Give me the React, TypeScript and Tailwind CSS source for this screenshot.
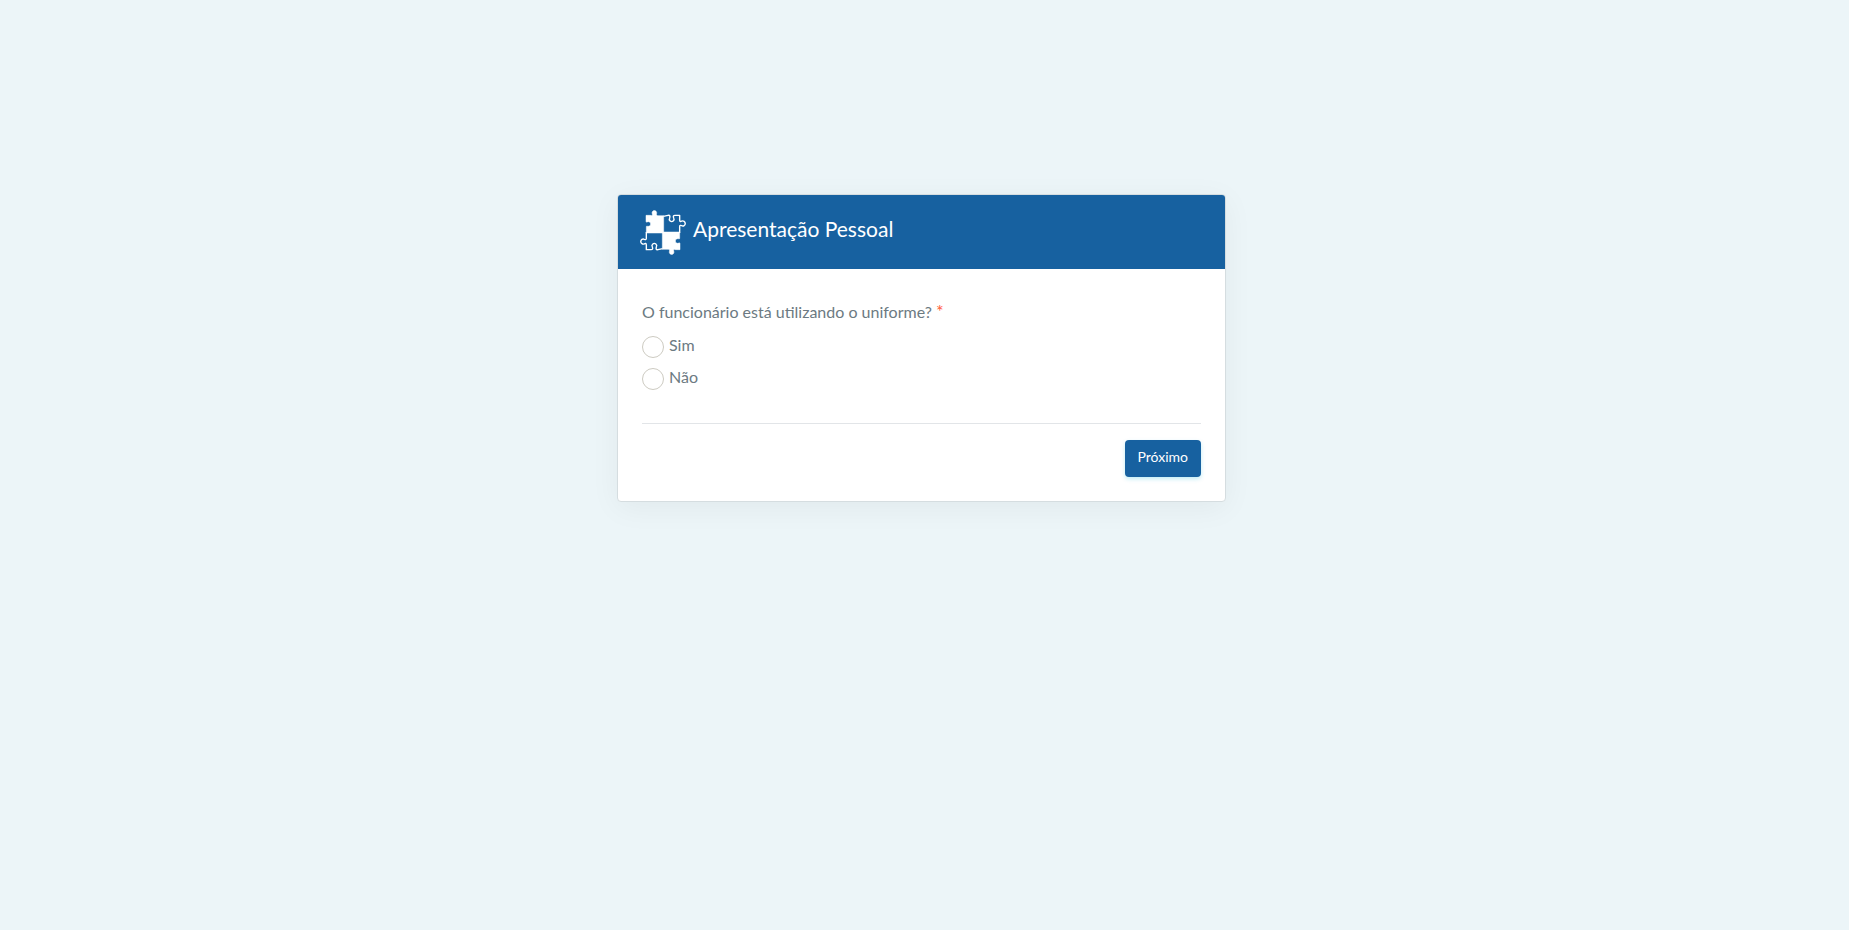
import React from "react";

function PuzzleHalf() {
  return (
    <>
      <path
        fill="#fff"
        stroke="#fff"
        strokeWidth="1.5"
        d="M48 44H62C67 45 68 43 66.500 39A7 7 0 1 1 80 38C79 42 79 44 83 45H101V97H49V79C48 75 52 77 55 77A7 7 0 1 0 55 63C51 64 48 66 48 62Z"
      />
      <path
        fill="none"
        stroke="#fff"
        strokeWidth="4.2"
        strokeLinejoin="round"
        d="M100 47L114 44C121 43 120 48 119 52A7 7 0 1 0 131 52C129 47 130 44 135 44H149V58C149 64 152 63 155 61.5A7.500 7.500 0 1 1 155 75C152 74 149 73 149 78V97"
      />
    </>
  );
}

function PuzzleIcon() {
  return (
    <svg viewBox="30 28 138 135" className="h-[45px] w-[46px] shrink-0" aria-hidden="true">
      <PuzzleHalf />
      <g transform="rotate(180 99 95.5)">
        <PuzzleHalf />
      </g>
    </svg>
  );
}

const options = [
  { id: "sim", label: "Sim" },
  { id: "nao", label: "Não" },
];

export default function App() {
  return (
    <main className="flex min-h-screen items-start justify-center bg-[#ecf5f8] pt-[194px] pr-1.5 pb-8 font-[Lato,sans-serif] text-[#6c7a82]">
      <form
        className="w-full max-w-[609px] overflow-hidden rounded border border-[#d5dde0] bg-white shadow-[0_6px_30px_rgba(0,0,0,0.05)]"
        onSubmit={(e) => e.preventDefault()}
      >
        <header className="flex h-[74px] items-center gap-[7px] bg-[#1761a0] px-[22px] text-white">
          <PuzzleIcon />
          <h1 className="pb-1.5 text-[21px] leading-8">Apresentação Pessoal</h1>
        </header>
        <div className="p-6 pt-[31px]">
          <fieldset>
            <legend className="text-base leading-6">
              O funcionário está utilizando o uniforme?{" "}
              <span className="text-lg leading-none text-[#ff5c3c]">*</span>
            </legend>
            <div className="mt-[9px] flex flex-col gap-2">
              {options.map((o) => (
                <label key={o.id} htmlFor={o.id} className="flex h-6 items-center gap-[5px] text-base">
                  <input
                    id={o.id}
                    type="radio"
                    name="uniforme"
                    className="mt-1 size-[22px] shrink-0 appearance-none rounded-full border border-[#cdcbc2] bg-white checked:border-[6px] checked:border-[#1761a0]"
                  />
                  {o.label}
                </label>
              ))}
            </div>
          </fieldset>
          <div className="mt-[34px] flex justify-end border-t border-[#e2e5e8] pt-4">
            <button
              type="submit"
              className="h-[37px] rounded bg-[#1761a0] px-[13px] pb-1 text-sm text-white shadow-[0_2px_4px_rgba(0,180,220,0.25)]"
            >
              Próximo
            </button>
          </div>
        </div>
      </form>
    </main>
  );
}
